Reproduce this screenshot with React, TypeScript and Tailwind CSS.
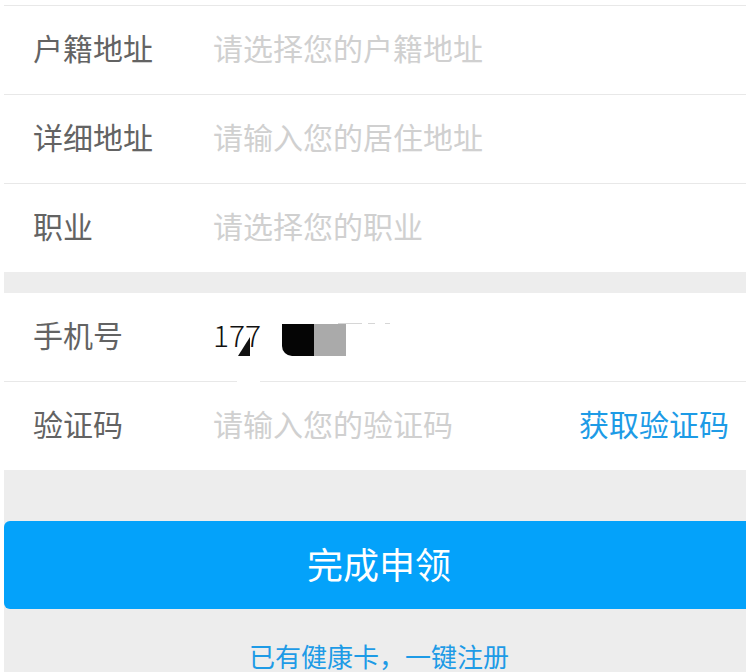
import React from "react";

const font = { fontFamily: '"Noto Sans CJK SC", "Noto Sans", sans-serif' };

type RowProps = {
  label: string;
  placeholder?: string;
  last?: boolean;
  children?: React.ReactNode;
};

function FormRow({ label, placeholder, last, children }: RowProps) {
  return (
    <div
      className={`relative flex items-center pl-[29px] pr-[25px] pb-[5px] bg-white ${
        last ? "h-[88px]" : "h-[89px] border-b border-[#e8e8e8]"
      }`}
    >
      <span className="w-[180px] shrink-0 text-[30px] text-[#636363]">{label}</span>
      {children ?? <span className="flex-1 text-[30px] text-[#d0d0d0]">{placeholder}</span>}
    </div>
  );
}

export default function App() {
  return (
    <div className="h-[672px] bg-white pl-[4px] overflow-hidden" style={font}>
      <div className="w-[750px] bg-[#ededed] min-h-[672px]">
        {/* tail of previous row */}
        <div className="h-[6px] bg-white border-b border-[#e8e8e8]" />

        <FormRow label="户籍地址" placeholder="请选择您的户籍地址" />
        <FormRow label="详细地址" placeholder="请输入您的居住地址" />
        <FormRow label="职业" placeholder="请选择您的职业" last />

        <div className="h-[21px]" />

        <FormRow label="手机号">
          <span className="flex-1 text-[30px] font-light text-[#111]">177</span>
          {/* redaction marks over the number */}
          <svg className="absolute left-[234px] top-[44px]" width="12" height="19" viewBox="0 0 12 19">
            <polygon points="12,0 12,19 0,19" fill="#111" />
          </svg>
          <div className="absolute left-[278px] top-[31px] w-[32px] h-[32px] bg-[#050505] rounded-bl-[10px]" />
          <div className="absolute left-[310px] top-[31px] w-[32px] h-[32px] bg-[#aaaaaa]" />
          <div className="absolute left-[334px] top-[30px] w-[24px] h-[1px] bg-[#d6d6d6]" />
          <div className="absolute left-[364px] top-[30px] w-[7px] h-[1px] bg-[#d6d6d6]" />
          <div className="absolute left-[381px] top-[30px] w-[5px] h-[1px] bg-[#d6d6d6]" />
          <div className="absolute left-[233px] bottom-[-1px] w-[23px] h-[1px] bg-white" />
        </FormRow>
        <FormRow label="验证码" last>
          <span className="flex-1 text-[30px] text-[#d0d0d0]">请输入您的验证码</span>
          <button className="text-[30px] text-[#1d9be6]">获取验证码</button>
        </FormRow>

        <div className="pt-[51px]">
          <button className="w-full h-[88px] pb-[4px] rounded-[6px] bg-[#04a2fa] text-white text-[36px]">
            完成申领
          </button>
        </div>

        <div className="pt-[27px] text-center text-[26px] leading-[40px] text-[#1e9be6]">
          已有健康卡，一键注册
        </div>
      </div>
    </div>
  );
}
